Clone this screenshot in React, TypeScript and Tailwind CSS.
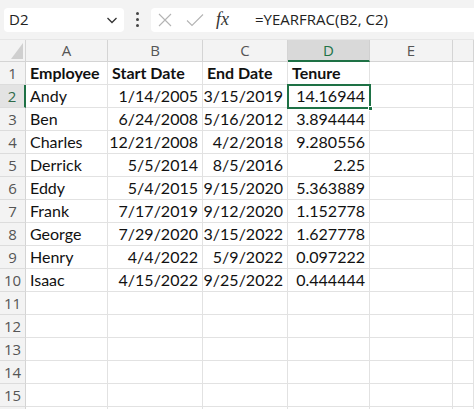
import React from "react";

const rows: [string, string, string, string][] = [
  ["Andy", "1/14/2005", "3/15/2019", "14.16944"],
  ["Ben", "6/24/2008", "5/16/2012", "3.894444"],
  ["Charles", "12/21/2008", "4/2/2018", "9.280556"],
  ["Derrick", "5/5/2014", "8/5/2016", "2.25"],
  ["Eddy", "5/4/2015", "9/15/2020", "5.363889"],
  ["Frank", "7/17/2019", "9/12/2020", "1.152778"],
  ["George", "7/29/2020", "3/15/2022", "1.627778"],
  ["Henry", "4/4/2022", "5/9/2022", "0.097222"],
  ["Isaac", "4/15/2022", "9/25/2022", "0.444444"],
];

const cellFont = { fontFamily: "Lato, 'Open Sans', sans-serif" };
const uiFont = { fontFamily: "'Open Sans', 'Noto Sans', sans-serif" };

function RowHeader({ n, active }: { n?: number; active?: boolean }) {
  return (
    <div
      className={
        "h-[23px] flex items-center justify-center text-[15px] border-b border-[#dcdcdc] " +
        (active
          ? "bg-[#e3e3e3] text-[#2f6b4a] border-r-2 border-r-[#1e7145]"
          : "bg-[#f3f3f3] text-[#555] border-r border-r-[#d4d4d4]")
      }
      style={uiFont}
    >
      {n}
    </div>
  );
}

function Cell({
  children,
  right,
  bold,
}: {
  children?: React.ReactNode;
  right?: boolean;
  bold?: boolean;
}) {
  return (
    <div
      className={
        "h-[23px] flex items-center px-[4px] border-r border-b border-[#e2e2e2] text-[16px] text-[#111] whitespace-nowrap overflow-visible " +
        (right ? "justify-end " : "justify-start ") +
        (bold ? "font-bold" : "")
      }
      style={cellFont}
    >
      {children}
    </div>
  );
}

export default function App() {
  const cols = ["A", "B", "C", "D", "E", ""];
  return (
    <div className="w-[474px] h-[409px] overflow-hidden bg-white relative">
      {/* Toolbar */}
      <div className="h-[40px] bg-[#f3f3f3] flex items-center pl-[4px] border-b border-[#e6e6e6]">
        <div className="w-[120px] h-[24px] bg-white rounded-[4px] flex items-center justify-between pl-[5px] pr-[4px]" style={uiFont}>
          <span className="text-[15px] text-[#222]">D2</span>
          <svg width="14" height="14" viewBox="0 0 14 14" className="mr-[1px]">
            <path d="M2.5 5 L7 9.5 L11.5 5" fill="none" stroke="#333" strokeWidth="1.3" />
          </svg>
        </div>
        <div className="w-[27px] flex flex-col items-center justify-center gap-[3px]">
          <span className="w-[3px] h-[3px] rounded-full bg-[#444]" />
          <span className="w-[3px] h-[3px] rounded-full bg-[#444]" />
          <span className="w-[3px] h-[3px] rounded-full bg-[#444]" />
        </div>
        <div className="flex-1 h-[24px] bg-white rounded-l-[4px] flex items-center">
          <svg width="16" height="16" viewBox="0 0 16 16" className="ml-[6px]">
            <path d="M2 2 L14 14 M14 2 L2 14" stroke="#b4b4b4" strokeWidth="1.1" fill="none" />
          </svg>
          <svg width="20" height="16" viewBox="0 0 20 16" className="ml-[12px]">
            <path d="M2 8.5 L7 13.5 L18 2.5" stroke="#b4b4b4" strokeWidth="1.1" fill="none" />
          </svg>
          <span
            className="ml-[11px] text-[18px] italic text-[#333]"
            style={{ fontFamily: "'Liberation Serif', serif" }}
          >
            fx
          </span>
          <span className="ml-[26px] text-[15px] text-[#222]" style={uiFont}>
            =YEARFRAC(B2, C2)
          </span>
        </div>
      </div>

      {/* Grid */}
      <div className="grid grid-cols-[26px_82px_95px_85px_82px_83px_1fr]">
        {/* header row */}
        <div className="h-[22px] bg-[#f3f3f3] border-r border-b border-[#d4d4d4] flex items-end justify-end pr-[2px] pb-[2px]">
          <svg width="12" height="16" viewBox="0 0 12 16">
            <path d="M12 0 L12 16 L0 16 Z" fill="#cfcfcf" />
          </svg>
        </div>
        {cols.map((c, i) =>
          c === "D" ? (
            <div
              key={i}
              className="h-[22px] bg-[#d9d9d9] border-r border-[#d0d0d0] border-b-2 border-b-[#1e7145] flex items-center justify-center text-[15px] text-[#217346]"
              style={uiFont}
            >
              {c}
            </div>
          ) : (
            <div
              key={i}
              className="h-[22px] bg-[#f3f3f3] border-r border-b border-[#d4d4d4] flex items-center justify-center text-[15px] text-[#555]"
              style={uiFont}
            >
              {c}
            </div>
          )
        )}

        {/* row 1 */}
        <RowHeader n={1} />
        <Cell bold>Employee</Cell>
        <Cell bold>Start Date</Cell>
        <Cell bold>End Date</Cell>
        <Cell bold>Tenure</Cell>
        <Cell />
        <Cell />

        {rows.map((r, i) => (
          <React.Fragment key={i}>
            <RowHeader n={i + 2} active={i === 0} />
            <Cell>{r[0]}</Cell>
            <Cell right>{r[1]}</Cell>
            <Cell right>{r[2]}</Cell>
            {i === 0 ? (
              <div className="relative">
                <Cell right>{r[3]}</Cell>
                <div className="absolute -left-[1px] -top-[1px] w-[84px] h-[25px] border-2 border-[#1e7145] pointer-events-none" />
                <div className="absolute right-[-3px] bottom-[-3px] w-[5px] h-[5px] bg-[#1e7145] border border-white" />
              </div>
            ) : (
              <Cell right>{r[3]}</Cell>
            )}
            <Cell />
            <Cell />
          </React.Fragment>
        ))}

        {[11, 12, 13, 14, 15].map((n) => (
          <React.Fragment key={n}>
            <RowHeader n={n} />
            <Cell />
            <Cell />
            <Cell />
            <Cell />
            <Cell />
            <Cell />
          </React.Fragment>
        ))}
        <RowHeader />
        <Cell />
        <Cell />
        <Cell />
        <Cell />
        <Cell />
        <Cell />
      </div>
    </div>
  );
}
